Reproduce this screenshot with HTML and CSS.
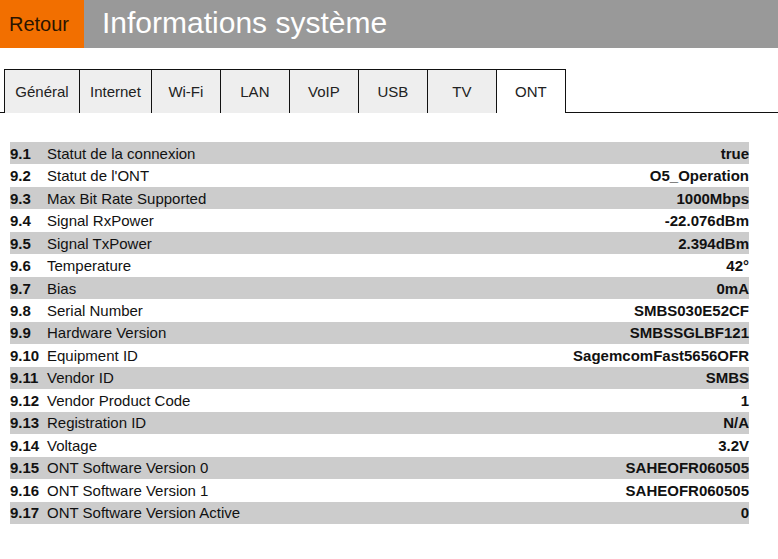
FILE: index.html
```html
<!DOCTYPE html>
<html lang="fr">
<head>
<meta charset="UTF-8">
<meta name="viewport" content="width=device-width, initial-scale=1.0">
<title>Informations système</title>
<link rel="stylesheet" href="styles.css">
</head>
<body>

<div class="header">
    <a class="back" href="#">Retour</a>
    <h1 class="title">Informations système</h1>
</div>

<div class="tabs">
    <span class="tab-lead"></span>
    <a class="tab" href="#">Général</a>
    <a class="tab" href="#">Internet</a>
    <a class="tab" href="#">Wi-Fi</a>
    <a class="tab" href="#">LAN</a>
    <a class="tab" href="#">VoIP</a>
    <a class="tab" href="#">USB</a>
    <a class="tab" href="#">TV</a>
    <a class="tab active" href="#">ONT</a>
    <span class="tab-fill"></span>
</div>

<table class="info">
    <tr><td class="num">9.1</td><td class="label">Statut de la connexion</td><td class="value">true</td></tr>
    <tr><td class="num">9.2</td><td class="label">Statut de l'ONT</td><td class="value">O5_Operation</td></tr>
    <tr><td class="num">9.3</td><td class="label">Max Bit Rate Supported</td><td class="value">1000Mbps</td></tr>
    <tr><td class="num">9.4</td><td class="label">Signal RxPower</td><td class="value">-22.076dBm</td></tr>
    <tr><td class="num">9.5</td><td class="label">Signal TxPower</td><td class="value">2.394dBm</td></tr>
    <tr><td class="num">9.6</td><td class="label">Temperature</td><td class="value">42°</td></tr>
    <tr><td class="num">9.7</td><td class="label">Bias</td><td class="value">0mA</td></tr>
    <tr><td class="num">9.8</td><td class="label">Serial Number</td><td class="value">SMBS030E52CF</td></tr>
    <tr><td class="num">9.9</td><td class="label">Hardware Version</td><td class="value">SMBSSGLBF121</td></tr>
    <tr><td class="num">9.10</td><td class="label">Equipment ID</td><td class="value">SagemcomFast5656OFR</td></tr>
    <tr><td class="num">9.11</td><td class="label">Vendor ID</td><td class="value">SMBS</td></tr>
    <tr><td class="num">9.12</td><td class="label">Vendor Product Code</td><td class="value">1</td></tr>
    <tr><td class="num">9.13</td><td class="label">Registration ID</td><td class="value">N/A</td></tr>
    <tr><td class="num">9.14</td><td class="label">Voltage</td><td class="value">3.2V</td></tr>
    <tr><td class="num">9.15</td><td class="label">ONT Software Version 0</td><td class="value">SAHEOFR060505</td></tr>
    <tr><td class="num">9.16</td><td class="label">ONT Software Version 1</td><td class="value">SAHEOFR060505</td></tr>
    <tr><td class="num">9.17</td><td class="label">ONT Software Version Active</td><td class="value">0</td></tr>
</table>

</body>
</html>
```

FILE: styles.css
```css
body {
    font-family: "Liberation Sans", Arial, sans-serif;
    background-color: #FFFFFF;
    color: #111;
    margin: 0;
}
.header {
    display: flex;
    height: 48px;
    background-color: #999999;
}
.back {
    display: flex;
    align-items: center;
    width: 84px;
    padding-left: 9px;
    box-sizing: border-box;
    background-color: #f26f00;
    color: #2a1400;
    font-size: 20px;
    text-decoration: none;
}
.title {
    margin: 0 0 0 18px;
    font-size: 30px;
    font-weight: normal;
    line-height: 46px;
    color: #FFFFFF;
}
.tabs {
    display: flex;
    margin-top: 21px;
    height: 44px;
}
.tab-lead {
    width: 4px;
    border-bottom: 1px solid #111;
}
.tab {
    display: flex;
    align-items: center;
    justify-content: center;
    min-width: 69px;
    padding: 0 10px;
    box-sizing: border-box;
    border-left: 1px solid #111;
    border-top: 1px solid #111;
    background-color: #eeeeee;
    color: #222;
    font-size: 15px;
    text-decoration: none;
}
.tab:first-of-type {
    min-width: 75px;
}
.tab.active {
    width: 70px;
    background-color: #FFFFFF;
    border-right: 1px solid #111;
}
.tab-fill {
    flex: 1;
    border-bottom: 1px solid #111;
}
.info {
    margin: 29px 0 0 10px;
    width: 739px;
    height: 382px;
    border-collapse: collapse;
    font-size: 15px;
}
.info td {
    padding: 0;
}
.info tr:nth-child(odd) {
    background-color: #cccccc;
}
.num {
    width: 37px;
    font-weight: bold;
}
.value {
    text-align: right;
    font-weight: bold;
}
```
